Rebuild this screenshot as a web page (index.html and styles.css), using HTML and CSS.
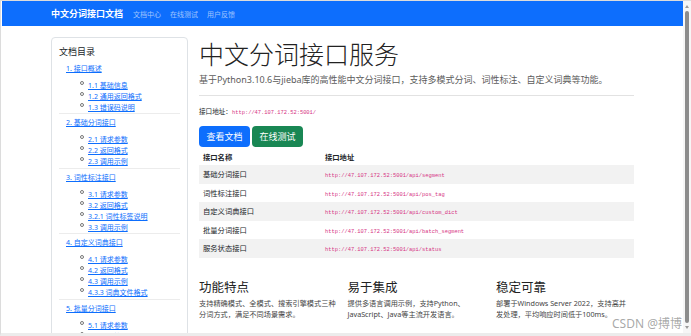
FILE: index.html
```html
<!DOCTYPE html>
<html lang="zh-CN">
<head>
    <meta charset="UTF-8">
    <meta name="viewport" content="width=device-width, initial-scale=1.0">
    <title>中文分词接口文档</title>
    <link rel="stylesheet" href="styles.css">
</head>
<body>
<div class="window">
    <div class="page">
        <!-- Top navbar -->
        <nav class="navbar">
            <div class="container nav-inner">
                <span class="brand">中文分词接口文档</span>
                <a class="nav-link">文档中心</a>
                <a class="nav-link">在线测试</a>
                <a class="nav-link">用户反馈</a>
            </div>
        </nav>

        <div class="container layout">
            <!-- Table of contents -->
            <aside class="toc">
                <div class="toc-title">文档目录</div>
                <div class="toc-sec">
                    <a class="toc-link">1. 接口概述</a>
                    <ul>
                        <li><a>1.1 基础信息</a></li>
                        <li><a>1.2 通用返回格式</a></li>
                        <li><a>1.3 错误码说明</a></li>
                    </ul>
                </div>
                <div class="toc-sec">
                    <a class="toc-link">2. 基础分词接口</a>
                    <ul>
                        <li><a>2.1 请求参数</a></li>
                        <li><a>2.2 返回格式</a></li>
                        <li><a>2.3 调用示例</a></li>
                    </ul>
                </div>
                <div class="toc-sec">
                    <a class="toc-link">3. 词性标注接口</a>
                    <ul>
                        <li><a>3.1 请求参数</a></li>
                        <li><a>3.2 返回格式</a></li>
                        <li><a>3.2.1 词性标签说明</a></li>
                        <li><a>3.3 调用示例</a></li>
                    </ul>
                </div>
                <div class="toc-sec">
                    <a class="toc-link">4. 自定义词典接口</a>
                    <ul>
                        <li><a>4.1 请求参数</a></li>
                        <li><a>4.2 返回格式</a></li>
                        <li><a>4.3 调用示例</a></li>
                        <li><a>4.3.3 词典文件格式</a></li>
                    </ul>
                </div>
                <div class="toc-sec">
                    <a class="toc-link">5. 批量分词接口</a>
                    <ul>
                        <li><a>5.1 请求参数</a></li>
                        <li><a>5.2 返回格式</a></li>
                        <li><a>5.3 调用示例</a></li>
                    </ul>
                </div>
            </aside>

            <!-- Main content -->
            <main class="main">
                <h1 class="title">中文分词接口服务</h1>
                <p class="lead">基于Python3.10.6与jieba库的高性能中文分词接口，支持多模式分词、词性标注、自定义词典等功能。</p>
                <hr class="divider">
                <p class="address">接口地址：<code>http://47.107.172.52:5001/</code></p>
                <div class="buttons">
                    <a class="btn btn-blue">查看文档</a>
                    <a class="btn btn-green">在线测试</a>
                </div>

                <table class="api-table">
                    <thead>
                        <tr><th class="col-name">接口名称</th><th>接口地址</th></tr>
                    </thead>
                    <tbody>
                        <tr><td>基础分词接口</td><td><code>http://47.107.172.52:5001/api/segment</code></td></tr>
                        <tr><td>词性标注接口</td><td><code>http://47.107.172.52:5001/api/pos_tag</code></td></tr>
                        <tr><td>自定义词典接口</td><td><code>http://47.107.172.52:5001/api/custom_dict</code></td></tr>
                        <tr><td>批量分词接口</td><td><code>http://47.107.172.52:5001/api/batch_segment</code></td></tr>
                        <tr><td>服务状态接口</td><td><code>http://47.107.172.52:5001/api/status</code></td></tr>
                    </tbody>
                </table>

                <div class="features">
                    <div class="feature">
                        <h3>功能特点</h3>
                        <p>支持精确模式、全模式、搜索引擎模式三种分词方式，满足不同场景需求。</p>
                    </div>
                    <div class="feature">
                        <h3>易于集成</h3>
                        <p>提供多语言调用示例，支持Python、JavaScript、Java等主流开发语言。</p>
                    </div>
                    <div class="feature">
                        <h3>稳定可靠</h3>
                        <p>部署于Windows Server 2022，支持高并<br>发处理，平均响应时间低于100ms。</p>
                    </div>
                </div>
            </main>
        </div>

        <div class="watermark">CSDN @搏博</div>
    </div>

    <!-- Fake scrollbar -->
    <div class="scrollbar">
        <span class="arrow up"></span>
        <span class="thumb"></span>
        <span class="arrow down"></span>
    </div>
</div>
</body>
</html>
```

FILE: styles.css
```css
/* Page base */
html, body {
    margin: 0;
    height: 100%;
    overflow: hidden;
    font-family: "Noto Sans", "Noto Sans CJK SC", sans-serif;
    color: #212529;
    background: #fff;
}

.window {
    display: flex;
    height: 336px;
    box-sizing: border-box;
    border-top: 1px solid #dcdcdc;
    border-left: 1px solid #dcdcdc;
    border-bottom: 3px solid #ececec;
}

.page {
    flex: 1;
    position: relative;
    overflow: hidden;
    margin-left: 1px;
}

.container {
    width: 583px;
    margin: 0 auto;
}

/* Navbar */
.navbar {
    height: 25px;
    background-color: #0d6efd;
}

.nav-inner {
    display: flex;
    align-items: center;
    height: 100%;
}

.brand {
    font-size: 9px;
    font-weight: bold;
    color: #fff;
    margin-right: 10px;
}

.nav-link {
    font-size: 7px;
    color: rgba(255, 255, 255, 0.6);
    margin-right: 9px;
}

/* Two column layout */
.layout {
    display: flex;
    gap: 11px;
    margin-top: 11px;
    align-items: flex-start;
}

/* Table of contents card */
.toc {
    width: 137px;
    flex-shrink: 0;
    box-sizing: border-box;
    border: 1px solid #dee2e6;
    border-radius: 4px;
    padding: 6.5px 7px 20px;
}

.toc-title {
    font-size: 9px;
    line-height: 13px;
    margin-bottom: 2px;
}

.toc-sec {
    padding: 3px 0 3.5px;
    border-bottom: 1px solid #ececec;
}

.toc-sec a {
    color: #0d6efd;
    text-decoration: underline;
    font-size: 7px;
    line-height: 11px;
}

.toc-link {
    display: block;
    padding-left: 7px;
}

.toc-sec ul {
    list-style: none;
    margin: 3px 0 0;
    padding: 0;
}

.toc-sec li {
    position: relative;
    padding-left: 29px;
    line-height: 11px;
    height: 11px;
}

.toc-sec li::before {
    content: '';
    position: absolute;
    left: 21px;
    top: 4px;
    width: 2px;
    height: 2px;
    border: 1px solid #777;
    border-radius: 50%;
}

/* Main column */
.main {
    width: 435px;
}

.title {
    font-size: 25px;
    font-weight: 300;
    line-height: 30px;
    margin: 2px 0 0;
    color: #222;
}

.lead {
    font-size: 9px;
    line-height: 13px;
    margin: 3.5px 0 0;
    color: #5c5c5c;
}

.divider {
    border: none;
    border-top: 1px solid #e2e2e2;
    margin: 9.5px 0 0;
}

.address {
    font-size: 6.6px;
    line-height: 10px;
    margin: 11px 0 0;
}

code {
    font-family: "Liberation Mono", "DejaVu Sans Mono", monospace;
    font-size: 5.4px;
    color: #d63384;
}

.buttons {
    display: flex;
    gap: 2px;
    margin-top: 8px;
}

.btn {
    display: flex;
    align-items: center;
    justify-content: center;
    height: 21px;
    width: 51px;
    border-radius: 4px;
    color: #fff;
    font-size: 9px;
}

.btn-blue {
    background-color: #0d6efd;
}

.btn-green {
    background-color: #198754;
}

/* API table */
.api-table {
    width: 100%;
    margin-top: 2px;
    border-collapse: collapse;
    font-size: 7.3px;
}

.api-table th {
    text-align: left;
    font-weight: bold;
    height: 16px;
    padding: 0 4px;
}

.api-table .col-name {
    width: 114px;
}

.api-table td {
    height: 18.5px;
    padding: 0 4px;
}

.api-table tbody tr:nth-child(odd) {
    background-color: #f2f2f2;
}

/* Feature blocks */
.features {
    display: grid;
    grid-template-columns: repeat(3, 138px);
    column-gap: 10.5px;
    margin-top: 22px;
}

.feature h3 {
    font-size: 12.5px;
    font-weight: normal;
    line-height: 15px;
    margin: 0;
    color: #222;
}

.feature p {
    font-size: 7.2px;
    line-height: 11px;
    margin: 3px 0 0;
    color: #444;
}

/* Watermark overlay */
.watermark {
    position: absolute;
    right: 1px;
    bottom: 2px;
    font-size: 12px;
    line-height: 14px;
    color: rgba(130, 130, 130, 0.7);
    text-shadow: 0 0 2px #fff;
    pointer-events: none;
}

/* Scrollbar */
.scrollbar {
    width: 8px;
    display: flex;
    flex-direction: column;
    align-items: center;
    background: #f6f6f6;
}

.thumb {
    flex: 1;
    width: 4px;
    background: #8c8c8c;
    border-radius: 2px;
    margin: 3px 0;
}

.arrow {
    width: 0;
    height: 0;
    border-left: 2.5px solid transparent;
    border-right: 2.5px solid transparent;
    margin-top: 4px;
}

.arrow.up {
    border-bottom: 3px solid #9a9a9a;
}

.arrow.down {
    border-top: 3px solid #9a9a9a;
    margin: 0 0 4px;
}
```
